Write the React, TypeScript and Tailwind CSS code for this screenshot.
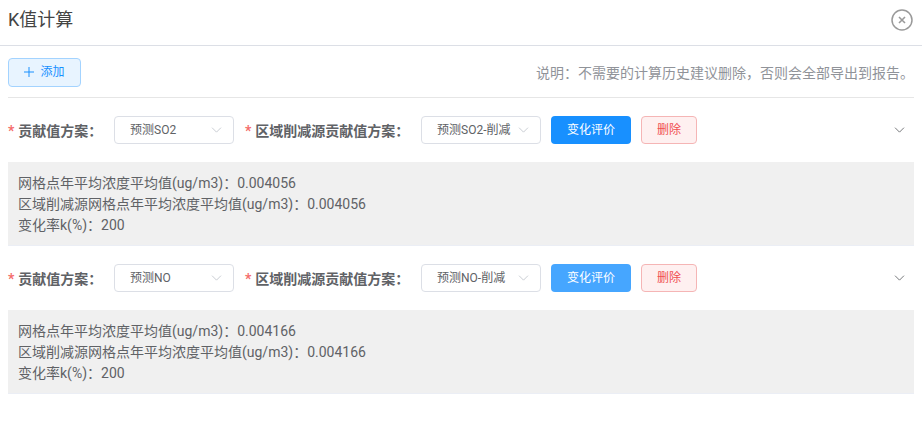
import React from "react";

function Chevron({ className }: { className: string }) {
  return (
    <svg viewBox="0 0 12 7" className={className} fill="none" stroke="currentColor" strokeWidth="1">
      <path d="M0.8 0.8 L6 6 L11.2 0.8" />
    </svg>
  );
}

function Select({ value, width }: { value: string; width: string }) {
  return (
    <div className={`flex h-7 items-center justify-between rounded border border-[#dcdfe6] bg-white pl-[15px] pr-[11px] ${width}`}>
      <span className="whitespace-nowrap text-xs text-[#606266]">{value}</span>
      <Chevron className="h-[6px] w-[11px] text-[#c0c4cc]" />
    </div>
  );
}

function Label({ text }: { text: string }) {
  return (
    <div className="flex items-center whitespace-nowrap pt-[1px] text-sm font-bold text-[#606266]">
      <span className="mr-1 text-[#f56c6c]">*</span>
      {text}
    </div>
  );
}

function Row({ a, b, light, lines }: { a: string; b: string; light?: boolean; lines: string[] }) {
  return (
    <div>
      <div className="flex h-[64px] items-center pb-[1px] pt-[1px]">
        <div className="w-[106px]"><Label text={"贡献值方案\uFF1A"} /></div>
        <Select value={a} width="w-[120px]" />
        <div className="ml-[11px] w-[176px]"><Label text={"区域削减源贡献值方案\uFF1A"} /></div>
        <Select value={b} width="w-[120px]" />
        <button className={`ml-[10px] h-7 w-20 rounded text-xs text-white ${light ? "bg-[#46a6ff]" : "bg-[#1890ff]"}`}>变化评价</button>
        <button className="ml-[10px] h-7 w-14 rounded border border-[#f5b5b5] bg-[#fef0f0] text-xs text-[#f04f4f]">删除</button>
        <Chevron className="ml-auto mr-[9px] h-[6px] w-[11px] text-[#606266]" />
      </div>
      <div className="h-[84px] border-b border-[#ebeef5] bg-[#f0f0f0] px-[10px] pb-[8px] pt-[11px] text-sm leading-[21px] text-[#606266]">
        {lines.map((l) => <div key={l}>{l}</div>)}
      </div>
    </div>
  );
}

export default function App() {
  return (
    <div className="h-[430px] w-[922px] overflow-hidden bg-white font-['Roboto','Noto_Sans_CJK_SC',sans-serif]">
      <header className="flex h-[46px] items-center justify-between border-b border-[#dcdfe6] pb-[5px] pl-2 pr-[9px]">
        <h1 className="text-lg font-normal text-[#444]">K值计算</h1>
        <svg viewBox="0 0 22 22" className="h-[22px] w-[22px]" fill="none" stroke="#9a9a9a">
          <circle cx="11" cy="11" r="10" strokeWidth="1.5" />
          <path d="M8 8 L14 14 M14 8 L8 14" strokeWidth="1.6" />
        </svg>
      </header>
      <div className="px-2">
        <div className="flex h-[52px] items-center justify-between border-b border-[#e6e6e6] pt-[1px]">
          <button className="flex h-[29px] w-[73px] items-center justify-center gap-[6px] rounded border border-[#a3d3ff] bg-[#e8f4ff] text-xs text-[#1890ff]">
            <svg viewBox="0 0 10 10" className="h-[10px] w-[10px]" stroke="currentColor" strokeWidth="1"><path d="M5 0 V10 M0 5 H10" /></svg>
            添加
          </button>
          <p className="mt-[2px] text-sm text-[#909399]">{"说明\uFF1A不需要的计算历史建议删除\uFF0C否则会全部导出到报告。"}</p>
        </div>
        <Row a="预测SO2" b="预测SO2-削减" lines={["网格点年平均浓度平均值(ug/m3)\uFF1A0.004056", "区域削减源网格点年平均浓度平均值(ug/m3)\uFF1A0.004056", "变化率k(%)\uFF1A200"]} />
        <Row a="预测NO" b="预测NO-削减" light lines={["网格点年平均浓度平均值(ug/m3)\uFF1A0.004166", "区域削减源网格点年平均浓度平均值(ug/m3)\uFF1A0.004166", "变化率k(%)\uFF1A200"]} />
      </div>
    </div>
  );
}
